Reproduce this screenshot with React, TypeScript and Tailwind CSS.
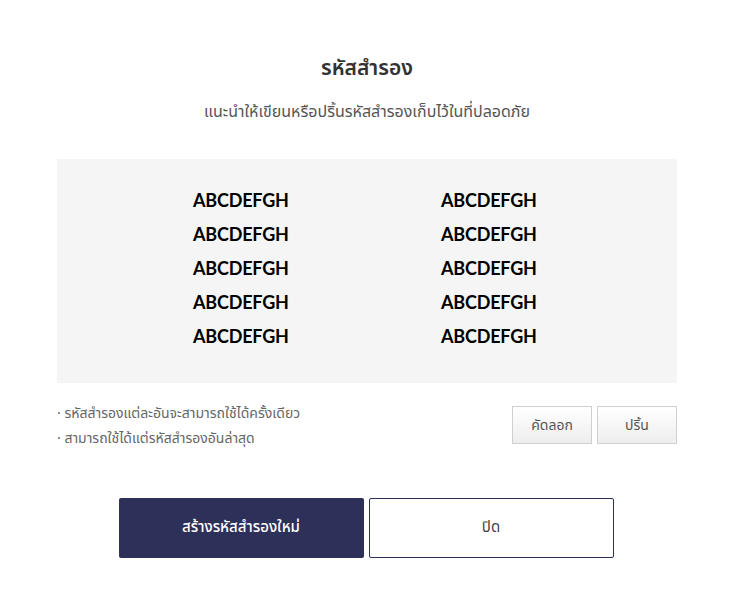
import React from "react";

const codes = ["ABCDEFGH","ABCDEFGH","ABCDEFGH","ABCDEFGH","ABCDEFGH","ABCDEFGH","ABCDEFGH","ABCDEFGH","ABCDEFGH","ABCDEFGH"];

export default function App() {
  const thai = { fontFamily: '"Noto Sans Thai", "Noto Sans", "Liberation Sans", sans-serif' };
  return (
    <div className="w-[734px] h-[613px] bg-white" style={thai}>
      <div className="pt-[52px] flex flex-col items-center">
        <h1 className="text-[21px] leading-[34px] font-semibold text-[#333]">รหัสสำรอง</h1>
        <p className="mt-[14px] text-[16px] leading-[24px] text-[#555]">แนะนำให้เขียนหรือปริ้นรหัสสำรองเก็บไว้ในที่ปลอดภัย</p>
      </div>
      <div className="mx-[57px] mt-[35px] h-[224px] bg-[#f5f5f5] pt-[29px]">
        <div className="grid grid-cols-[248px_auto] pl-[136px] gap-y-[10px]">
          {codes.map((c, i) => (
            <div key={i} className="text-[18px] leading-[24px] font-bold text-black tracking-[-0.2px]" style={{ fontFamily: '"Lato", "DejaVu Sans", sans-serif' }}>{c}</div>
          ))}
        </div>
      </div>
      <div className="mx-[57px] mt-[18px] flex justify-between items-start">
        <div className="text-[14px] leading-[25px] text-[#666]">
          <div>· รหัสสำรองแต่ละอันจะสามารถใช้ได้ครั้งเดียว</div>
          <div>· สามารถใช้ได้แต่รหัสสำรองอันล่าสุด</div>
        </div>
        <div className="flex gap-[5px] mt-[5px]">
          <button className="w-[80px] h-[38px] border border-[#d0d0d0] bg-gradient-to-b from-white to-[#ededed] text-[14px] text-[#555]">คัดลอก</button>
          <button className="w-[80px] h-[38px] border border-[#d0d0d0] bg-gradient-to-b from-white to-[#ededed] text-[14px] text-[#555]">ปริ้น</button>
        </div>
      </div>
      <div className="mt-[47px] flex justify-center gap-[5px] pr-[2px]">
        <button className="w-[245px] h-[60px] rounded-[2px] bg-[#2d3059] text-white text-[15px] font-medium">สร้างรหัสสำรองใหม่</button>
        <button className="w-[245px] h-[60px] rounded-[2px] border border-[#2d3059] bg-white text-[#444] text-[15px]">ปิด</button>
      </div>
    </div>
  );
}
